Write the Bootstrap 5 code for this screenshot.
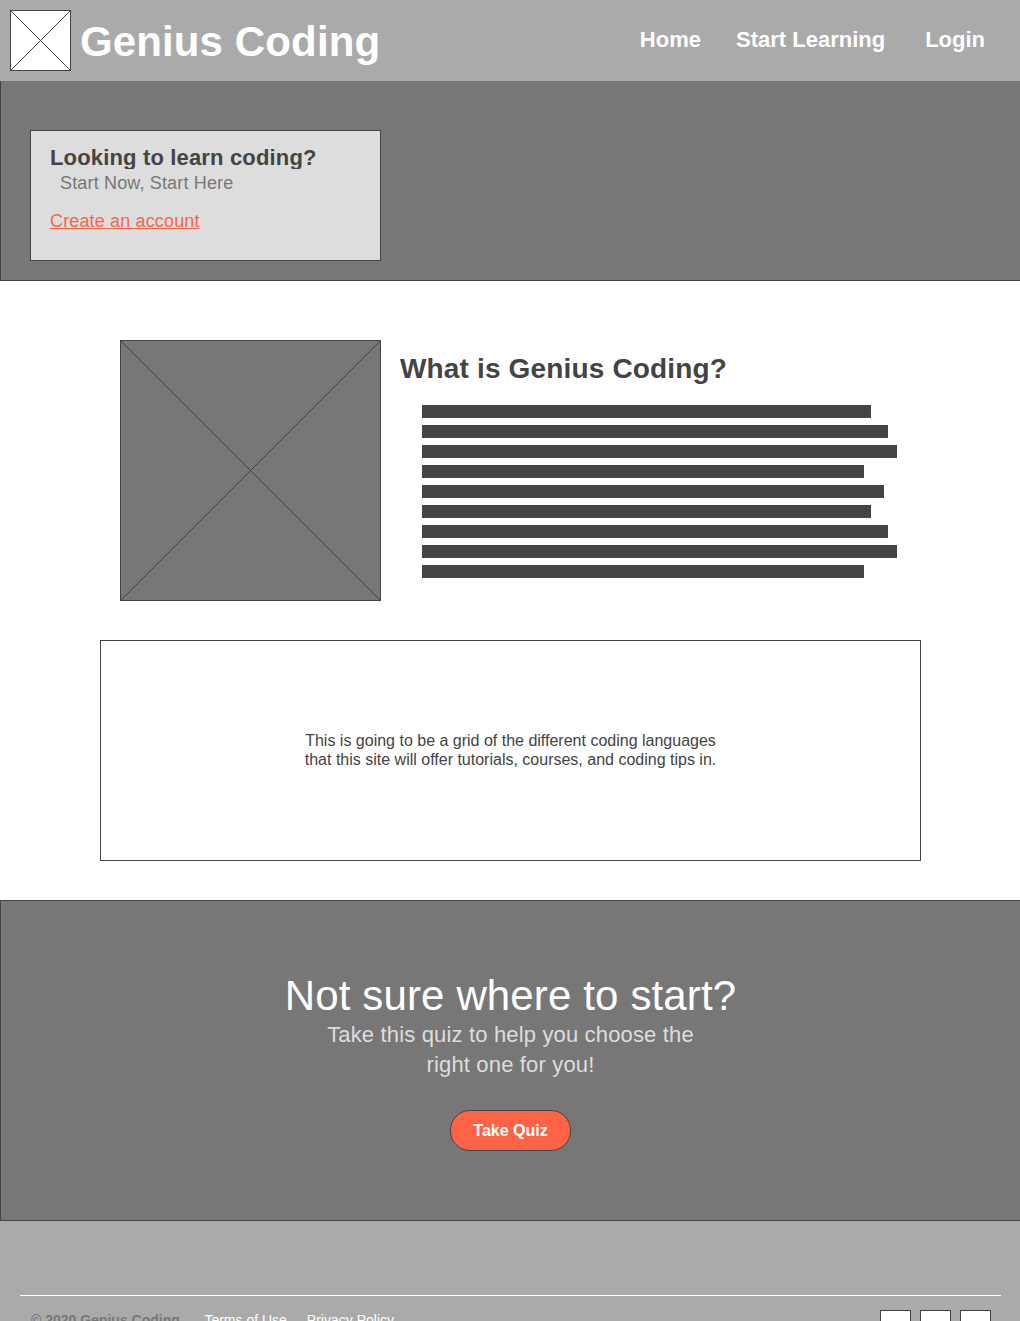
<!DOCTYPE html>
<html lang="en">
<head>
<meta charset="utf-8">
<meta name="viewport" content="width=device-width, initial-scale=1">
<title>Genius Coding</title>
<link href="https://cdn.jsdelivr.net/npm/bootstrap@5.3.0/dist/css/bootstrap.min.css" rel="stylesheet">
<style>
body{font-family:"Liberation Sans",Arial,sans-serif;color:#444;background:#fff;height:1321px;overflow:hidden}
a{color:inherit;text-decoration:none}
.site-header{height:81px;padding:10px 35px 0 10px;background:#aaa;color:#fff}
.crossed{display:block;flex:none;shape-rendering:crispEdges}
.brand-name{font-size:42px;line-height:64px;margin-left:9px;letter-spacing:.12px}
.site-nav{font-size:22px;line-height:30px;padding-top:15px}
.nav-learn{margin:0 40px 0 35px}
.hero{height:200px;padding:49px 0 0 29px;background:#777;border:solid #444;border-width:0 0 1px 1px}
.signup{width:351px;height:131px;padding:14px 19px;background:#ddd;border:1px solid #444}
.signup h2{font-size:22px;line-height:25px;height:24px;overflow:hidden;letter-spacing:.16px}
.signup p{font-size:18px;line-height:28px;color:#777;padding-left:10px;letter-spacing:.16px}
.signup a{font-size:18px;line-height:28px;margin-top:10px;color:#ff6347;letter-spacing:.15px}
.about{padding:59px 120px 0}
.about h2{font-size:28px;line-height:34px;margin:12px 0 19px;letter-spacing:.16px}
.about-text{margin-left:19px}
.lines{margin-left:22px;gap:7px}
.lines div{height:13px;background:#444}
.languages{width:821px;height:221px;margin:39px 0 39px 100px;padding-bottom:2px;border:1px solid #444;font-size:16px;line-height:19px}
.quiz{height:321px;padding-top:70px;background:#777;border:solid #444;border-width:1px 0 1px 1px;color:#fff}
.quiz h2{font-size:42px;line-height:50px;height:49px;letter-spacing:.14px}
.quiz p{font-size:22px;line-height:30px;color:#ddd;letter-spacing:.16px}
.quiz .btn{width:121px;height:41px;margin-top:30px;padding:0;border:1px solid #444;border-radius:20px;background:#ff6347;color:#fff;font-size:16px;line-height:39px}
.site-footer{height:100px;padding:74px 19px 0 20px;background:#aaa;overflow:hidden}
.footer-row{border-top:1px solid #fff;padding:14px 10px 0 11px;font-size:14px;line-height:20px;color:#fff}
.copyright{color:#777;width:173.4px}
.social{gap:9px}
.social span{width:31px;height:31px;background:#fff;border:1px solid #444}
</style>
</head>
<body>
<header class="site-header d-flex justify-content-between align-items-start">
  <a href="#" class="d-flex align-items-start">
    <svg class="crossed" width="61" height="61" viewBox="0 0 61 61" fill="#fff" stroke="#444"><path d="M.5.5h60v60H.5zL60.5 60.5M60.5.5L.5 60.5"/></svg>
    <span class="brand-name fw-bold">Genius Coding</span>
  </a>
  <nav class="site-nav d-flex fw-bold"><a href="#">Home</a><a href="#" class="nav-learn">Start Learning</a><a href="#">Login</a></nav>
</header>
<main>
  <section class="hero">
    <div class="signup">
      <h2 class="fw-bold m-0">Looking to learn coding?</h2>
      <p class="m-0">Start Now, Start Here</p>
      <a href="#" class="d-inline-block text-decoration-underline">Create an account</a>
    </div>
  </section>
  <section class="about d-flex">
    <svg class="crossed" width="261" height="261" viewBox="0 0 261 261" fill="#777" stroke="#444"><path d="M.5.5h260v260H.5zL260.5 260.5M260.5.5L.5 260.5"/></svg>
    <div class="about-text">
      <h2 class="fw-bold">What is Genius Coding?</h2>
      <div class="lines d-flex flex-column">
        <div style="width:449px"></div><div style="width:466px"></div><div style="width:475px"></div><div style="width:442px"></div><div style="width:462px"></div><div style="width:449px"></div><div style="width:466px"></div><div style="width:475px"></div><div style="width:442px"></div>
      </div>
    </div>
  </section>
  <section class="languages d-flex align-items-center justify-content-center text-center">
    <p class="m-0">This is going to be a grid of the different coding languages<br>that this site will offer tutorials, courses, and coding tips in.</p>
  </section>
  <section class="quiz text-center">
    <h2 class="fw-normal m-0">Not sure where to start?</h2>
    <p class="m-0">Take this quiz to help you choose the<br>right one for you!</p>
    <a href="#" class="btn fw-bold">Take Quiz</a>
  </section>
</main>
<footer class="site-footer">
  <div class="footer-row d-flex align-items-start">
    <span class="copyright fw-bold">© 2020 Genius Coding</span>
    <a href="#">Terms of Use</a>
    <a href="#" class="ms-3 ps-1">Privacy Policy</a>
    <div class="social d-flex ms-auto"><span></span><span></span><span></span></div>
  </div>
</footer>
<script src="https://cdn.jsdelivr.net/npm/bootstrap@5.3.0/dist/js/bootstrap.bundle.min.js"></script>
</body>
</html>
